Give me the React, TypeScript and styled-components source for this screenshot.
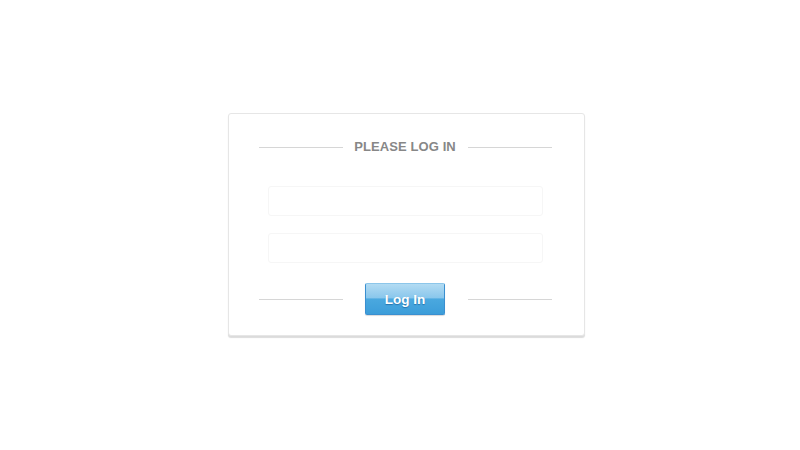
import React from "react";
import styled, { createGlobalStyle } from "styled-components";

const Global = createGlobalStyle`
  html, body { margin: 0; padding: 0; background: #ffffff; }
  body { font-family: "Liberation Sans", Arial, sans-serif; }
`;

const Page = styled.div`
  width: 800px;
  height: 450px;
  display: flex;
  justify-content: center;
  align-items: flex-start;
  padding-top: 113px;
  box-sizing: border-box;
`;

const Card = styled.form`
  width: 357px;
  box-sizing: border-box;
  margin-left: 12px;
  background: #ffffff;
  border: 1px solid #e6e6e6;
  border-radius: 3px;
  box-shadow: 0 2px 1px rgba(0, 0, 0, 0.14);
  padding: 25px 32px 20px 30px;
  display: flex;
  flex-direction: column;
  align-items: center;
`;

const Row = styled.div`
  width: 293px;
  display: flex;
  align-items: center;
  justify-content: space-between;
`;

const Rule = styled.span`
  width: 84px;
  height: 1px;
  background: #d6d6d6;
`;

const Title = styled.h1`
  margin: 0;
  font-size: 13px;
  line-height: 16px;
  font-weight: bold;
  color: #878787;
  letter-spacing: 0.1px;
  flex: 1;
  text-align: center;
`;

const Fields = styled.div`
  margin-top: 31px;
  margin-bottom: 20px;
  display: flex;
  flex-direction: column;
  gap: 17px;
`;

const Input = styled.input`
  width: 275px;
  height: 30px;
  box-sizing: border-box;
  border: 1px solid #f6f6f6;
  border-radius: 3px;
  background: #ffffff;
  outline: none;
  padding: 0 8px;
  font-family: inherit;
  font-size: 13px;
`;

const Button = styled.button`
  width: 80px;
  height: 32px;
  box-sizing: border-box;
  border: 1px solid #3a8fd0;
  border-top-color: #8cc6ea;
  border-radius: 2px;
  background: linear-gradient(
    to bottom,
    #b2dbf3 0%,
    #8ac7ec 46%,
    #4aa8df 50%,
    #3c9dd9 100%
  );
  box-shadow: 0 1px 1px rgba(0, 0, 0, 0.15);
  color: #ffffff;
  font-family: inherit;
  font-size: 13.5px;
  font-weight: bold;
  text-shadow: 0 1px 1px rgba(0, 60, 120, 0.45);
  cursor: pointer;
  padding: 0;
`;

export default function App() {
  return (
    <>
      <Global />
      <Page>
        <Card onSubmit={(e) => e.preventDefault()}>
          <Row>
            <Rule />
            <Title>PLEASE LOG IN</Title>
            <Rule />
          </Row>
          <Fields>
            <Input type="text" aria-label="Username" />
            <Input type="password" aria-label="Password" />
          </Fields>
          <Row>
            <Rule />
            <Button type="submit">Log In</Button>
            <Rule />
          </Row>
        </Card>
      </Page>
    </>
  );
}
